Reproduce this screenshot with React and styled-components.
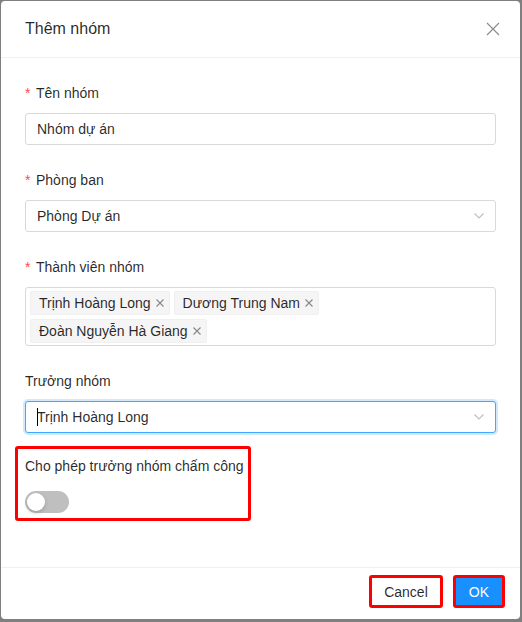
import React from "react";
import styled, { createGlobalStyle } from "styled-components";

const GlobalStyle = createGlobalStyle`
  html, body {
    margin: 0;
    padding: 0;
    background: #7f7f7f;
    height: 622px;
    overflow: hidden;
  }
  * {
    box-sizing: border-box;
  }
`;

const Modal = styled.div`
  margin: 1px 2px 3px 1px;
  height: 618px;
  background: #fff;
  border-radius: 4px;
  display: flex;
  flex-direction: column;
  font-family: "Liberation Sans", Arial, sans-serif;
  font-size: 14px;
  color: rgba(0, 0, 0, 0.85);
`;

const Header = styled.div`
  height: 57px;
  padding: 0 19px 0 24px;
  border-bottom: 1px solid #f0f0f0;
  display: flex;
  align-items: center;
  justify-content: space-between;
`;

const Title = styled.div`
  font-size: 16px;
  font-weight: 500;
  line-height: 22px;
`;

const CloseButton = styled.button`
  border: 0;
  background: none;
  padding: 0;
  width: 16px;
  height: 16px;
  display: flex;
  color: rgba(0, 0, 0, 0.45);
  cursor: pointer;
`;

const Body = styled.div`
  flex: 1;
  padding: 24px;
`;

const FormItem = styled.div`
  margin-bottom: 24px;
`;

const Label = styled.div`
  line-height: 22px;
  padding-bottom: 9px;
`;

const Required = styled.span`
  display: inline-block;
  width: 7px;
  margin-right: 4px;
  color: #ff4d4f;
  font-size: 14px;
`;

const Field = styled.div`
  position: relative;
  min-height: 32px;
  border: 1px solid ${(p) => (p.$focused ? "#40a9ff" : "#d9d9d9")};
  box-shadow: ${(p) => (p.$focused ? "0 0 0 2px rgba(24, 144, 255, 0.2)" : "none")};
  border-radius: 3px;
  padding: 0 30px 0 11px;
  display: flex;
  align-items: center;
  line-height: 30px;
  background: #fff;
`;

const Caret = styled.span`
  display: inline-block;
  width: 0;
  height: 18px;
  border-left: 1px solid #000;
  margin-right: -1px;
`;

const Arrow = styled.svg`
  position: absolute;
  right: 10px;
  top: 50%;
  margin-top: -6px;
`;

const MultiField = styled.div`
  border: 1px solid #d9d9d9;
  border-radius: 3px;
  padding: 1px 4px 0;
  display: flex;
  flex-wrap: wrap;
`;

const Tag = styled.span`
  display: inline-flex;
  align-items: center;
  height: 24px;
  margin: 2px 4px 2px 0;
  padding: 0 4px 0 8px;
  background: #f5f5f5;
  border: 1px solid #f0f0f0;
  border-radius: 2px;
  line-height: 22px;
`;

const TagClose = styled.svg`
  margin-left: 4px;
  color: rgba(0, 0, 0, 0.45);
`;

const Highlight = styled.div`
  display: inline-block;
  margin: -11px 0 0 -10px;
  padding: 6px 4px 0 7px;
  border: 3px solid #ff0000;
  border-radius: 3px;
`;

const SwitchRow = styled.div`
  height: 32px;
  display: flex;
  align-items: center;
`;

const Switch = styled.button`
  position: relative;
  width: 44px;
  height: 22px;
  border: 0;
  padding: 0;
  border-radius: 11px;
  background: ${(p) => (p.$on ? "#1890ff" : "#bfbfbf")};
  cursor: pointer;

  &::after {
    content: "";
    position: absolute;
    top: 2px;
    left: ${(p) => (p.$on ? "24px" : "2px")};
    width: 18px;
    height: 18px;
    border-radius: 50%;
    background: #fff;
    box-shadow: 0 2px 4px rgba(0, 35, 11, 0.2);
  }
`;

const Footer = styled.div`
  border-top: 1px solid #f0f0f0;
  padding: 7px 15px 11px 16px;
  display: flex;
  justify-content: flex-end;
  gap: 10px;
`;

const Button = styled.button`
  height: 33px;
  padding: 0 ${(p) => (p.$primary ? "13px" : "12px")};
  border: 3px solid #ff0000;
  border-radius: 3px;
  background: ${(p) => (p.$primary ? "#1890ff" : "#fff")};
  color: ${(p) => (p.$primary ? "#fff" : "rgba(0, 0, 0, 0.85)")};
  font-family: inherit;
  font-size: 14px;
  cursor: pointer;
`;

const members = ["Trịnh Hoàng Long", "Dương Trung Nam", "Đoàn Nguyễn Hà Giang"];

function ChevronDown() {
  return (
    <Arrow width="12" height="12" viewBox="0 0 12 12" fill="none">
      <polyline points="1.5,3.5 6,8 10.5,3.5" stroke="rgba(0,0,0,0.25)" strokeWidth="1.2" />
    </Arrow>
  );
}

function App() {
  return (
    <>
      <GlobalStyle />
      <Modal>
        <Header>
          <Title>Thêm nhóm</Title>
          <CloseButton aria-label="Close">
            <svg width="16" height="16" viewBox="0 0 16 16" fill="none">
              <path d="M2 2L14 14M14 2L2 14" stroke="currentColor" strokeWidth="1.2" />
            </svg>
          </CloseButton>
        </Header>

        <Body>
          <FormItem>
            <Label><Required>*</Required>Tên nhóm</Label>
            <Field>Nhóm dự án</Field>
          </FormItem>

          <FormItem>
            <Label><Required>*</Required>Phòng ban</Label>
            <Field>
              Phòng Dự án
              <ChevronDown />
            </Field>
          </FormItem>

          <FormItem>
            <Label><Required>*</Required>Thành viên nhóm</Label>
            <MultiField>
              {members.map((name) => (
                <Tag key={name}>
                  {name}
                  <TagClose width="10" height="10" viewBox="0 0 10 10" fill="none">
                    <path d="M1.5 1.5L8.5 8.5M8.5 1.5L1.5 8.5" stroke="currentColor" strokeWidth="1.1" />
                  </TagClose>
                </Tag>
              ))}
            </MultiField>
          </FormItem>

          <FormItem>
            <Label>Trưởng nhóm</Label>
            <Field $focused>
              <Caret />
              Trịnh Hoàng Long
              <ChevronDown />
            </Field>
          </FormItem>

          <Highlight>
            <Label>Cho phép trưởng nhóm chấm công</Label>
            <SwitchRow>
              <Switch aria-label="toggle" />
            </SwitchRow>
          </Highlight>
        </Body>

        <Footer>
          <Button>Cancel</Button>
          <Button $primary>OK</Button>
        </Footer>
      </Modal>
    </>
  );
}

export default App;
